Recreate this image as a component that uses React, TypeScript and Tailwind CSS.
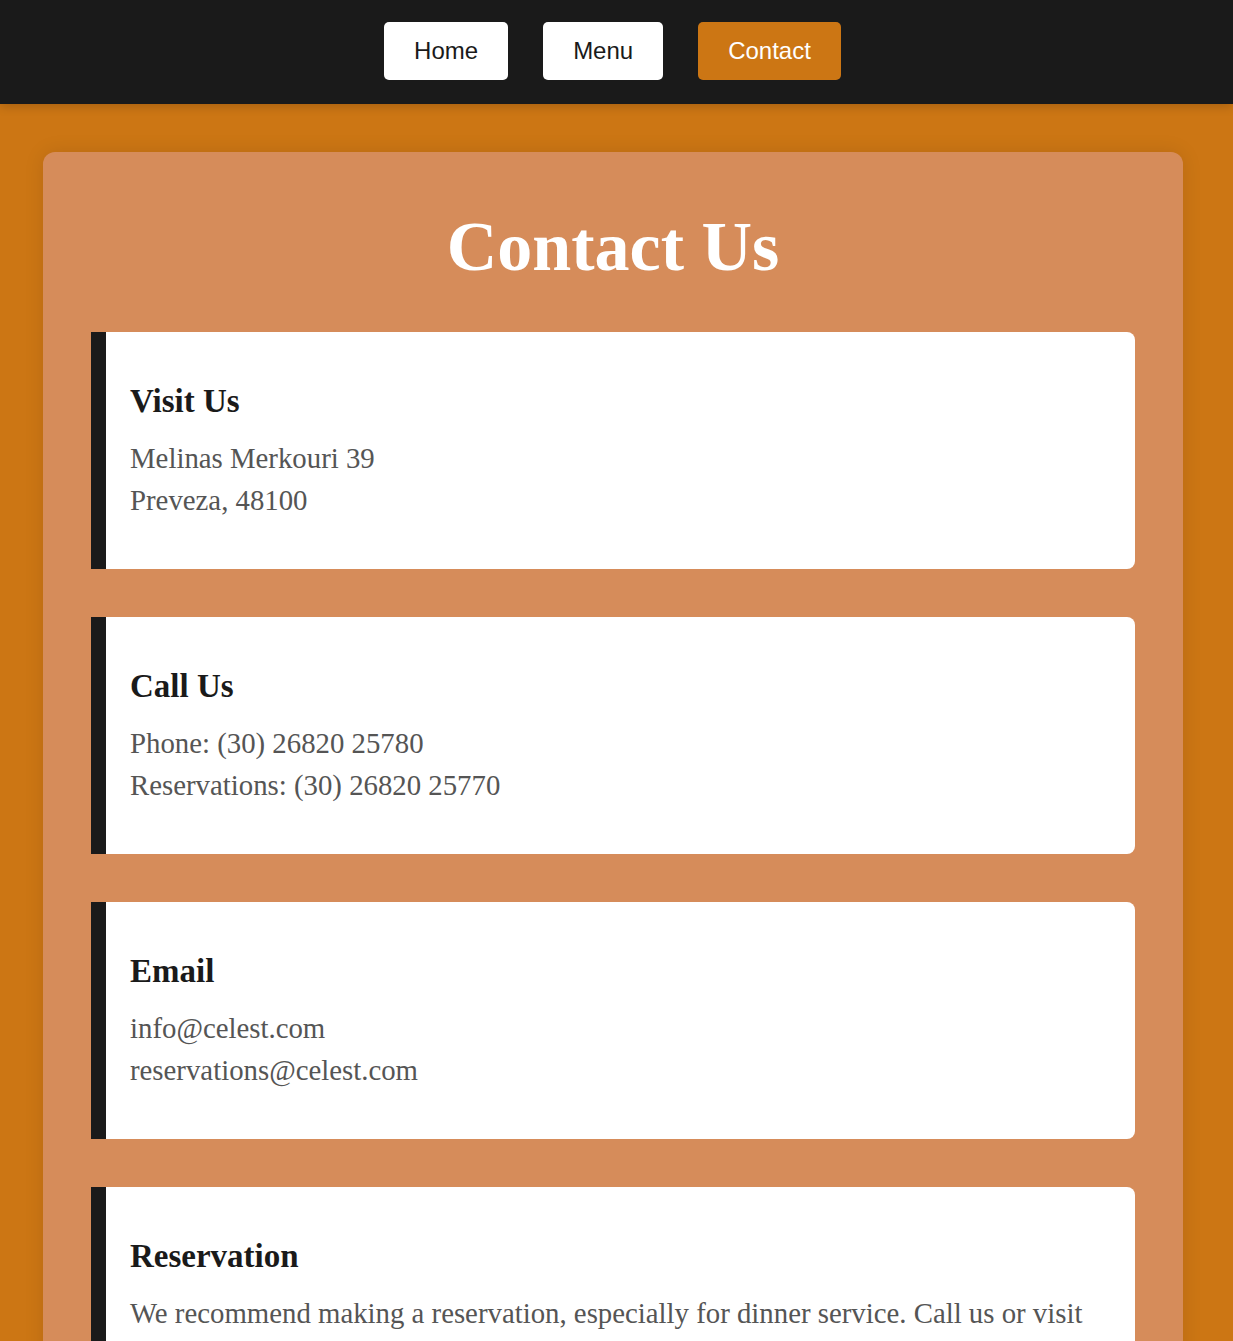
import React from "react";

const serif = { fontFamily: '"Liberation Serif", "Times New Roman", serif' };

const cards = [
  { title: "Visit Us", lines: ["Melinas Merkouri 39", "Preveza, 48100"] },
  { title: "Call Us", lines: ["Phone: (30) 26820 25780", "Reservations: (30) 26820 25770"] },
  { title: "Email", lines: ["info@celest.com", "reservations@celest.com"] },
  {
    title: "Reservation",
    lines: [
      "We recommend making a reservation, especially for dinner service. Call us or visit our restaurant in person to book your table.",
    ],
  },
];

const links = [
  { label: "Home", active: false },
  { label: "Menu", active: false },
  { label: "Contact", active: true },
];

export default function App() {
  return (
    <div className="min-h-screen bg-[#cc7614]" style={{ fontFamily: '"Liberation Sans", Arial, sans-serif' }}>
      <nav className="h-[104px] bg-[#1a1a1a] shadow-[0_2px_10px_rgba(0,0,0,0.2)] relative">
        <div className="flex justify-center gap-[35px] pt-[22px] pr-[8px]">
          {links.map((l) => (
            <a
              key={l.label}
              href="#"
              className={`px-[30px] py-[15px] rounded-[5px] text-[24px] leading-[1.15] ${
                l.active ? "bg-[#cc7614] text-white" : "bg-white text-[#1a1a1a]"
              }`}
            >
              {l.label}
            </a>
          ))}
        </div>
      </nav>

      <main className="pl-[43px] pr-[50px] pt-[48px] pb-[48px]">
        <div className="bg-[#d68c5a] rounded-[12px] px-[48px] pt-[53px] pb-[48px] shadow-[0_0_20px_rgba(0,0,0,0.1)]" style={serif}>
          <h1 className="text-center text-white font-bold text-[70px] leading-[84px] mb-[43px]">Contact Us</h1>
          <div className="flex flex-col gap-[48px]">
            {cards.map((c) => (
              <div
                key={c.title}
                className="bg-white border-l-[15px] border-[#1a1a1a] rounded-r-[8px] pl-6 pr-6 pt-[50px] pb-[48px]"
              >
                <h3 className="font-bold text-[33px] leading-[38px] text-[#1a1a1a] mb-[17px]">{c.title}</h3>
                {c.lines.map((line) => (
                  <p key={line} className="text-[28.8px] leading-[42px] text-[#555555]">
                    {line}
                  </p>
                ))}
              </div>
            ))}
          </div>
        </div>
      </main>
    </div>
  );
}
